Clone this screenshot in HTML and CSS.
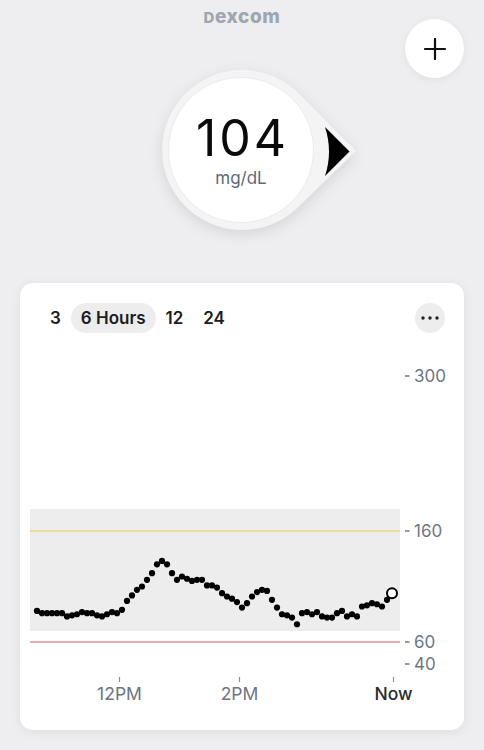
FILE: index.html
```html
<!DOCTYPE html>
<html lang="en">
<head>
  <meta charset="UTF-8">
  <meta name="viewport" content="width=device-width, initial-scale=1.0">
  <title>Dexcom</title>
  <link rel="stylesheet" href="styles.css">
</head>
<body>
  <div class="brand">Dexcom</div>

  <button class="add-btn" type="button" aria-label="Add event">
    <svg width="22" height="22" viewBox="0 0 22 22">
      <path d="M11 1 V21 M1 11 H21" stroke="#111" stroke-width="2.2" stroke-linecap="round"/>
    </svg>
  </button>

  <div class="gauge">
    <svg class="gauge-shape" width="240" height="180" viewBox="122 60 240 180">
      <path d="M356 151 L296.7 208.5 A80 80 0 1 1 296.7 91.5 Z" fill="#f4f4f5"/>
      <circle cx="241" cy="150" r="72.5" fill="#fff" stroke="#ececee" stroke-width="1"/>
      <path d="M325 127 L349.5 151.5 L325 176 Q333 151.5 325 127 Z" fill="#000"/>
    </svg>
    <div class="reading">
      <span class="value">104</span>
      <span class="unit">mg/dL</span>
    </div>
  </div>

  <div class="card">
    <div class="card-head">
      <div class="tabs">
        <span class="tab">3</span>
        <span class="tab active">6 Hours</span>
        <span class="tab">12</span>
        <span class="tab">24</span>
      </div>
      <button class="more-btn" type="button" aria-label="More">
        <svg width="18" height="4" viewBox="0 0 18 4">
          <circle cx="2" cy="2" r="1.7" fill="#222"/>
          <circle cx="9" cy="2" r="1.7" fill="#222"/>
          <circle cx="16" cy="2" r="1.7" fill="#222"/>
        </svg>
      </button>
    </div>

    <svg id="chart" class="chart" width="444" height="380" viewBox="20 345 444 380">
      <rect x="30" y="509" width="370" height="122" fill="#ededee"/>
      <line x1="30" y1="531" x2="400" y2="531" stroke="#f0d281" stroke-width="1.3"/>
      <line x1="30" y1="642" x2="400" y2="642" stroke="#c8625f" stroke-width="1.1"/>

      <g class="y-axis">
        <line x1="405" y1="376" x2="409.5" y2="376"/>
        <line x1="405" y1="531" x2="409.5" y2="531"/>
        <line x1="405" y1="642" x2="409.5" y2="642"/>
        <line x1="405" y1="664" x2="409.5" y2="664"/>
        <text x="414" y="382">300</text>
        <text x="414" y="537">160</text>
        <text x="414" y="648">60</text>
        <text x="414" y="670">40</text>
      </g>

      <g class="x-axis">
        <line x1="119.5" y1="677" x2="119.5" y2="682"/>
        <line x1="239.5" y1="677" x2="239.5" y2="682"/>
        <line x1="393.5" y1="677" x2="393.5" y2="682"/>
        <text x="119.5" y="700">12PM</text>
        <text x="239.5" y="700">2PM</text>
        <text class="now" x="393.5" y="700">Now</text>
      </g>

      <g id="readings"></g>
    </svg>
  </div>

  <script>
    // one reading every 5 minutes, oldest first (mg/dL)
    var readings = [
      88, 86, 86, 86, 86, 86, 83, 84, 85, 87, 86, 86, 84, 83, 85, 87, 86, 89,
      97, 102, 107, 110, 116, 122, 130, 133, 130, 122, 116, 119, 117, 115, 116, 116,
      111, 111, 109, 104, 101, 99, 96, 91, 95, 101, 105, 107, 106, 98, 91, 85,
      84, 82, 76, 86, 87, 85, 87, 83, 82, 82, 86, 88, 83, 85, 83, 92, 93, 95,
      94, 92, 98, 104
    ];

    var ns = 'http://www.w3.org/2000/svg';
    var group = document.getElementById('readings');

    function yFor(value) {
      return 531 + (160 - value) * 1.11;
    }

    readings.forEach(function(value, i) {
      var dot = document.createElementNS(ns, 'circle');
      var last = i === readings.length - 1;
      dot.setAttribute('cx', 37 + i * 5);
      dot.setAttribute('cy', yFor(value));
      if (last) {
        dot.setAttribute('r', 5);
        dot.setAttribute('fill', '#fff');
        dot.setAttribute('stroke', '#000');
        dot.setAttribute('stroke-width', 2);
      } else {
        dot.setAttribute('r', 3.1);
        dot.setAttribute('fill', '#000');
      }
      group.appendChild(dot);
    });
  </script>
</body>
</html>
```

FILE: styles.css
```css
/* Basic styling */
body {
  font-family: Inter, "Liberation Sans", sans-serif;
  margin: 0;
  padding: 0;
  background-color: #eeedef;
  color: #111;
  position: relative;
  width: 484px;
  height: 750px;
  overflow: hidden;
}

.brand {
  height: 34px;
  line-height: 34px;
  text-align: center;
  font-size: 19px;
  font-weight: 800;
  letter-spacing: 0.6px;
  color: #9ea6b0;
  text-transform: lowercase;
}
.brand::first-letter {
  font-size: 15px;
  text-transform: uppercase;
}

.add-btn {
  position: absolute;
  top: 19px;
  right: 20px;
  width: 59px;
  height: 59px;
  border: none;
  border-radius: 50%;
  background-color: #fff;
  box-shadow: 0 2px 8px rgba(0, 0, 0, 0.06);
  display: flex;
  align-items: center;
  justify-content: center;
  padding: 0;
  cursor: pointer;
}

/* glucose reading */
.gauge {
  display: grid;
  width: 240px;
  height: 180px;
  margin: 26px auto 0;
}
.gauge > * {
  grid-area: 1 / 1;
}
.gauge-shape {
  filter: drop-shadow(0 4px 7px rgba(0, 0, 0, 0.1));
}
.reading {
  position: relative;
  display: flex;
  flex-direction: column;
  align-items: center;
  justify-content: center;
  width: 238px;
  margin-top: 0;
}
.value {
  font-size: 50px;
  font-weight: 400;
  letter-spacing: 3px;
  padding-left: 3px;
  line-height: 54px;
  color: #0a0a0a;
}
.unit {
  font-size: 17px;
  line-height: 22px;
  color: #5e6a77;
  margin-top: 2px;
}

/* chart card */
.card {
  margin: 43px 20px 0;
  height: 447px;
  background-color: #fff;
  border-radius: 13px;
  box-shadow: 0 2px 12px rgba(0, 0, 0, 0.07);
  overflow: hidden;
}
.card-head {
  display: flex;
  align-items: center;
  justify-content: space-between;
  padding: 20px 19px 12px 20px;
}
.tabs {
  display: flex;
}
.tab {
  height: 30px;
  line-height: 30px;
  padding: 0 10px;
  border-radius: 15px;
  font-size: 17px;
  font-weight: 600;
  color: #1c1c1e;
}
.tab.active {
  background-color: #ededee;
}
.more-btn {
  width: 30px;
  height: 30px;
  border: none;
  border-radius: 50%;
  background-color: #ededee;
  display: flex;
  align-items: center;
  justify-content: center;
  padding: 0;
  cursor: pointer;
}

.chart {
  display: block;
}
.y-axis line {
  stroke: #6d7885;
  stroke-width: 1.3;
}
.y-axis text {
  font-size: 17px;
  fill: #6d7885;
}
.x-axis line {
  stroke: #8a9099;
  stroke-width: 1.2;
}
.x-axis text {
  font-size: 17.5px;
  fill: #6d7580;
  text-anchor: middle;
}
.x-axis .now {
  fill: #2a2a2c;
  font-weight: 500;
}
```
